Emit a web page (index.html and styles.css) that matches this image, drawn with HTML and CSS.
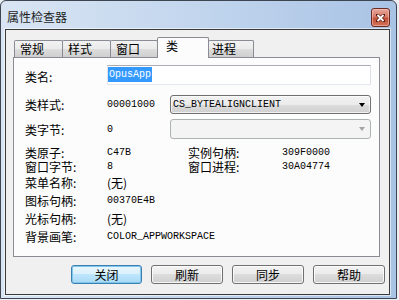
FILE: index.html
```html
<!DOCTYPE html>
<html lang="zh-CN">
<head>
<meta charset="utf-8">
<title>属性检查器</title>
<link rel="stylesheet" href="styles.css">
</head>
<body>
<div class="window">
  <div class="titlebar">
    <span class="title">属性检查器</span>
    <div class="close">
      <svg width="9" height="8" viewBox="0 0 9 8"><path d="M1.5 1 L7.5 7 M7.5 1 L1.5 7" stroke="#5a1a10" stroke-width="3.2" stroke-linecap="square"/><path d="M1.5 1 L7.5 7 M7.5 1 L1.5 7" stroke="#ffffff" stroke-width="1.8"/></svg>
    </div>
  </div>
  <div class="client">
    <div class="tabs">
      <div class="tab w49">常规</div>
      <div class="tab w49">样式</div>
      <div class="tab w48">窗口</div>
      <div class="tab active">类</div>
      <div class="tab w46">进程</div>
    </div>
    <div class="panel">
      <div class="row r1">
        <span class="lbl">类名:</span>
        <div class="edit"><span class="sel">OpusApp</span></div>
      </div>
      <div class="row r2">
        <span class="lbl">类样式:</span>
        <span class="val">00001000</span>
        <div class="combo"><span class="ctext">CS_BYTEALIGNCLIENT</span><span class="arrow"></span></div>
      </div>
      <div class="row r3">
        <span class="lbl">类字节:</span>
        <span class="val">0</span>
        <div class="combo disabled"><span class="ctext"></span><span class="arrow"></span></div>
      </div>
      <div class="grid">
        <span class="lbl">类原子:</span><span class="val">C47B</span><span class="lbl">实例句柄:</span><span class="val">309F0000</span>
        <span class="lbl">窗口字节:</span><span class="val">8</span><span class="lbl">窗口进程:</span><span class="val">30A04774</span>
        <span class="lbl">菜单名称:</span><span class="cjk">(无)</span><span></span><span></span>
        <span class="lbl">图标句柄:</span><span class="val">00370E4B</span><span></span><span></span>
        <span class="lbl">光标句柄:</span><span class="cjk">(无)</span><span></span><span></span>
        <span class="lbl">背景画笔:</span><span class="val span3">COLOR_APPWORKSPACE</span>
      </div>
    </div>
    <div class="buttons">
      <div class="btn default">关闭</div>
      <div class="btn">刷新</div>
      <div class="btn">同步</div>
      <div class="btn">帮助</div>
    </div>
  </div>
</div>
</body>
</html>
```

FILE: styles.css
```css
html, body {
  margin: 0;
  padding: 0;
}
body {
  width: 399px;
  height: 300px;
  background: #eceff3;
  font-family: "Noto Sans CJK SC", "Noto Sans", sans-serif;
  font-size: 12px;
  color: #000;
  overflow: hidden;
}
.window {
  box-sizing: border-box;
  width: 397px;
  height: 299px;
  border: 1px solid #3d4550;
  border-radius: 6px 6px 0 0;
  background: linear-gradient(to right, #d9e5f3 0%, #c4d7ee 45%, #a9c3e5 100%);
  padding: 0 6px 3px 4px;
  display: flex;
  flex-direction: column;
}
.titlebar {
  height: 28px;
  display: flex;
  align-items: flex-start;
  flex: none;
}
.title {
  margin-left: 2px;
  margin-top: 8px;
  line-height: 16px;
  color: #1e1e1e;
}
.close {
  margin-left: auto;
  margin-top: 7px;
  box-sizing: border-box;
  width: 19px;
  height: 19px;
  border: 1px solid #6b2b22;
  border-radius: 3px;
  background: linear-gradient(#e8a89b 0%, #d57a69 45%, #c24f38 55%, #d3735a 100%);
  box-shadow: inset 0 0 0 1px rgba(255, 220, 210, 0.45);
  display: flex;
  align-items: center;
  justify-content: center;
}
.client {
  flex: 1;
  box-sizing: border-box;
  border: 1px solid #3a3a3a;
  box-shadow: 0 0 0 1px rgba(255, 255, 255, 0.55);
  background: #f0f0f0;
  padding: 7px 0 0 7px;
  display: flex;
  flex-direction: column;
}
.tabs {
  height: 20px;
  display: flex;
  align-items: flex-end;
  margin-left: 1px;
  position: relative;
  z-index: 1;
}
.tab {
  box-sizing: border-box;
  height: 17px;
  margin-right: -1px;
  border: 1px solid #898c95;
  border-bottom: none;
  border-radius: 2px 2px 0 0;
  background: linear-gradient(#f2f2f2 0%, #ebebeb 50%, #dddddd 50%, #cfcfcf 100%);
  padding-left: 5px;
  line-height: 16px;
}
.w49 { width: 49px; }
.w48 { width: 48px; }
.w46 { width: 46px; padding-left: 3px; }
.tab.active {
  width: 52px;
  height: 21px;
  margin-bottom: -1px;
  background: #fcfcfc;
  padding-left: 8px;
  line-height: 16px;
}
.panel {
  box-sizing: border-box;
  width: 367px;
  height: 200px;
  border: 1px solid #898c95;
  background: #fcfcfc;
  padding: 7px 0 0 11px;
  display: flex;
  flex-direction: column;
}
.row {
  display: flex;
}
.lbl {
  white-space: nowrap;
}
.row .lbl {
  width: 82px;
  flex: none;
}
.r1 {
  height: 20px;
  align-items: flex-start;
}
.r1 .lbl {
  line-height: 20px;
  padding-top: 2px;
}
.r2 {
  margin-top: 10px;
  height: 19px;
  align-items: center;
}
.r3 {
  margin-top: 5px;
  height: 20px;
  align-items: center;
}
.val {
  font-family: "Liberation Mono", "DejaVu Sans Mono", monospace;
  font-size: 10px;
  white-space: nowrap;
}
.row .val {
  width: 63px;
  flex: none;
}
.edit {
  box-sizing: border-box;
  width: 264px;
  height: 20px;
  border: 1px solid;
  border-color: #abadb3 #dbdfe6 #e3e9ef #e2e3ea;
  background: #fff;
  padding-top: 1px;
}
.sel {
  display: inline-block;
  height: 15px;
  line-height: 15px;
  padding: 0 1px;
  background: #3399ff;
  color: #fff;
  font-family: "Liberation Mono", "DejaVu Sans Mono", monospace;
  font-size: 10px;
  vertical-align: top;
}
.combo {
  box-sizing: border-box;
  width: 201px;
  height: 100%;
  border: 1px solid #707070;
  border-radius: 3px;
  background: linear-gradient(#f2f2f2 0%, #ebebeb 50%, #dddddd 50%, #cfcfcf 100%);
  box-shadow: inset 0 0 0 1px rgba(255, 255, 255, 0.7);
  display: flex;
  align-items: center;
  padding: 0 4px 0 2px;
}
.ctext {
  flex: 1;
  font-family: "Liberation Mono", "DejaVu Sans Mono", monospace;
  font-size: 10px;
}
.arrow {
  width: 0;
  height: 0;
  border-left: 3.5px solid transparent;
  border-right: 3.5px solid transparent;
  border-top: 4px solid #000;
  margin-right: 1px;
}
.combo.disabled {
  border-color: #adb2b5;
  background: #f4f4f4;
  box-shadow: none;
}
.combo.disabled .arrow {
  border-top-color: #a3a3a3;
}
.grid {
  margin-top: 7px;
  display: grid;
  grid-template-columns: 82px 81px 94px 1fr;
  grid-template-rows: 14px 14px 18px 18px 18px 18px;
  align-items: center;
  line-height: 14px;
}
.cjk {
  white-space: nowrap;
}
.span3 {
  grid-column: span 3;
}
.buttons {
  display: flex;
  gap: 9px;
  margin-top: 8px;
  padding-left: 58px;
}
.btn {
  box-sizing: border-box;
  width: 72px;
  height: 19px;
  border: 1px solid #707070;
  border-radius: 3px;
  background: linear-gradient(#f2f2f2 0%, #ebebeb 50%, #dddddd 50%, #cfcfcf 100%);
  box-shadow: inset 0 0 0 1px rgba(255, 255, 255, 0.8);
  text-align: center;
  line-height: 17px;
}
.btn.default {
  width: 71px;
  border-color: #3c7fb1;
  background: linear-gradient(#eaf6fd 0%, #d9f0fc 50%, #bee6fd 50%, #a7d9f5 100%);
  box-shadow: inset 0 0 0 1px #7fc6ec;
}
```
